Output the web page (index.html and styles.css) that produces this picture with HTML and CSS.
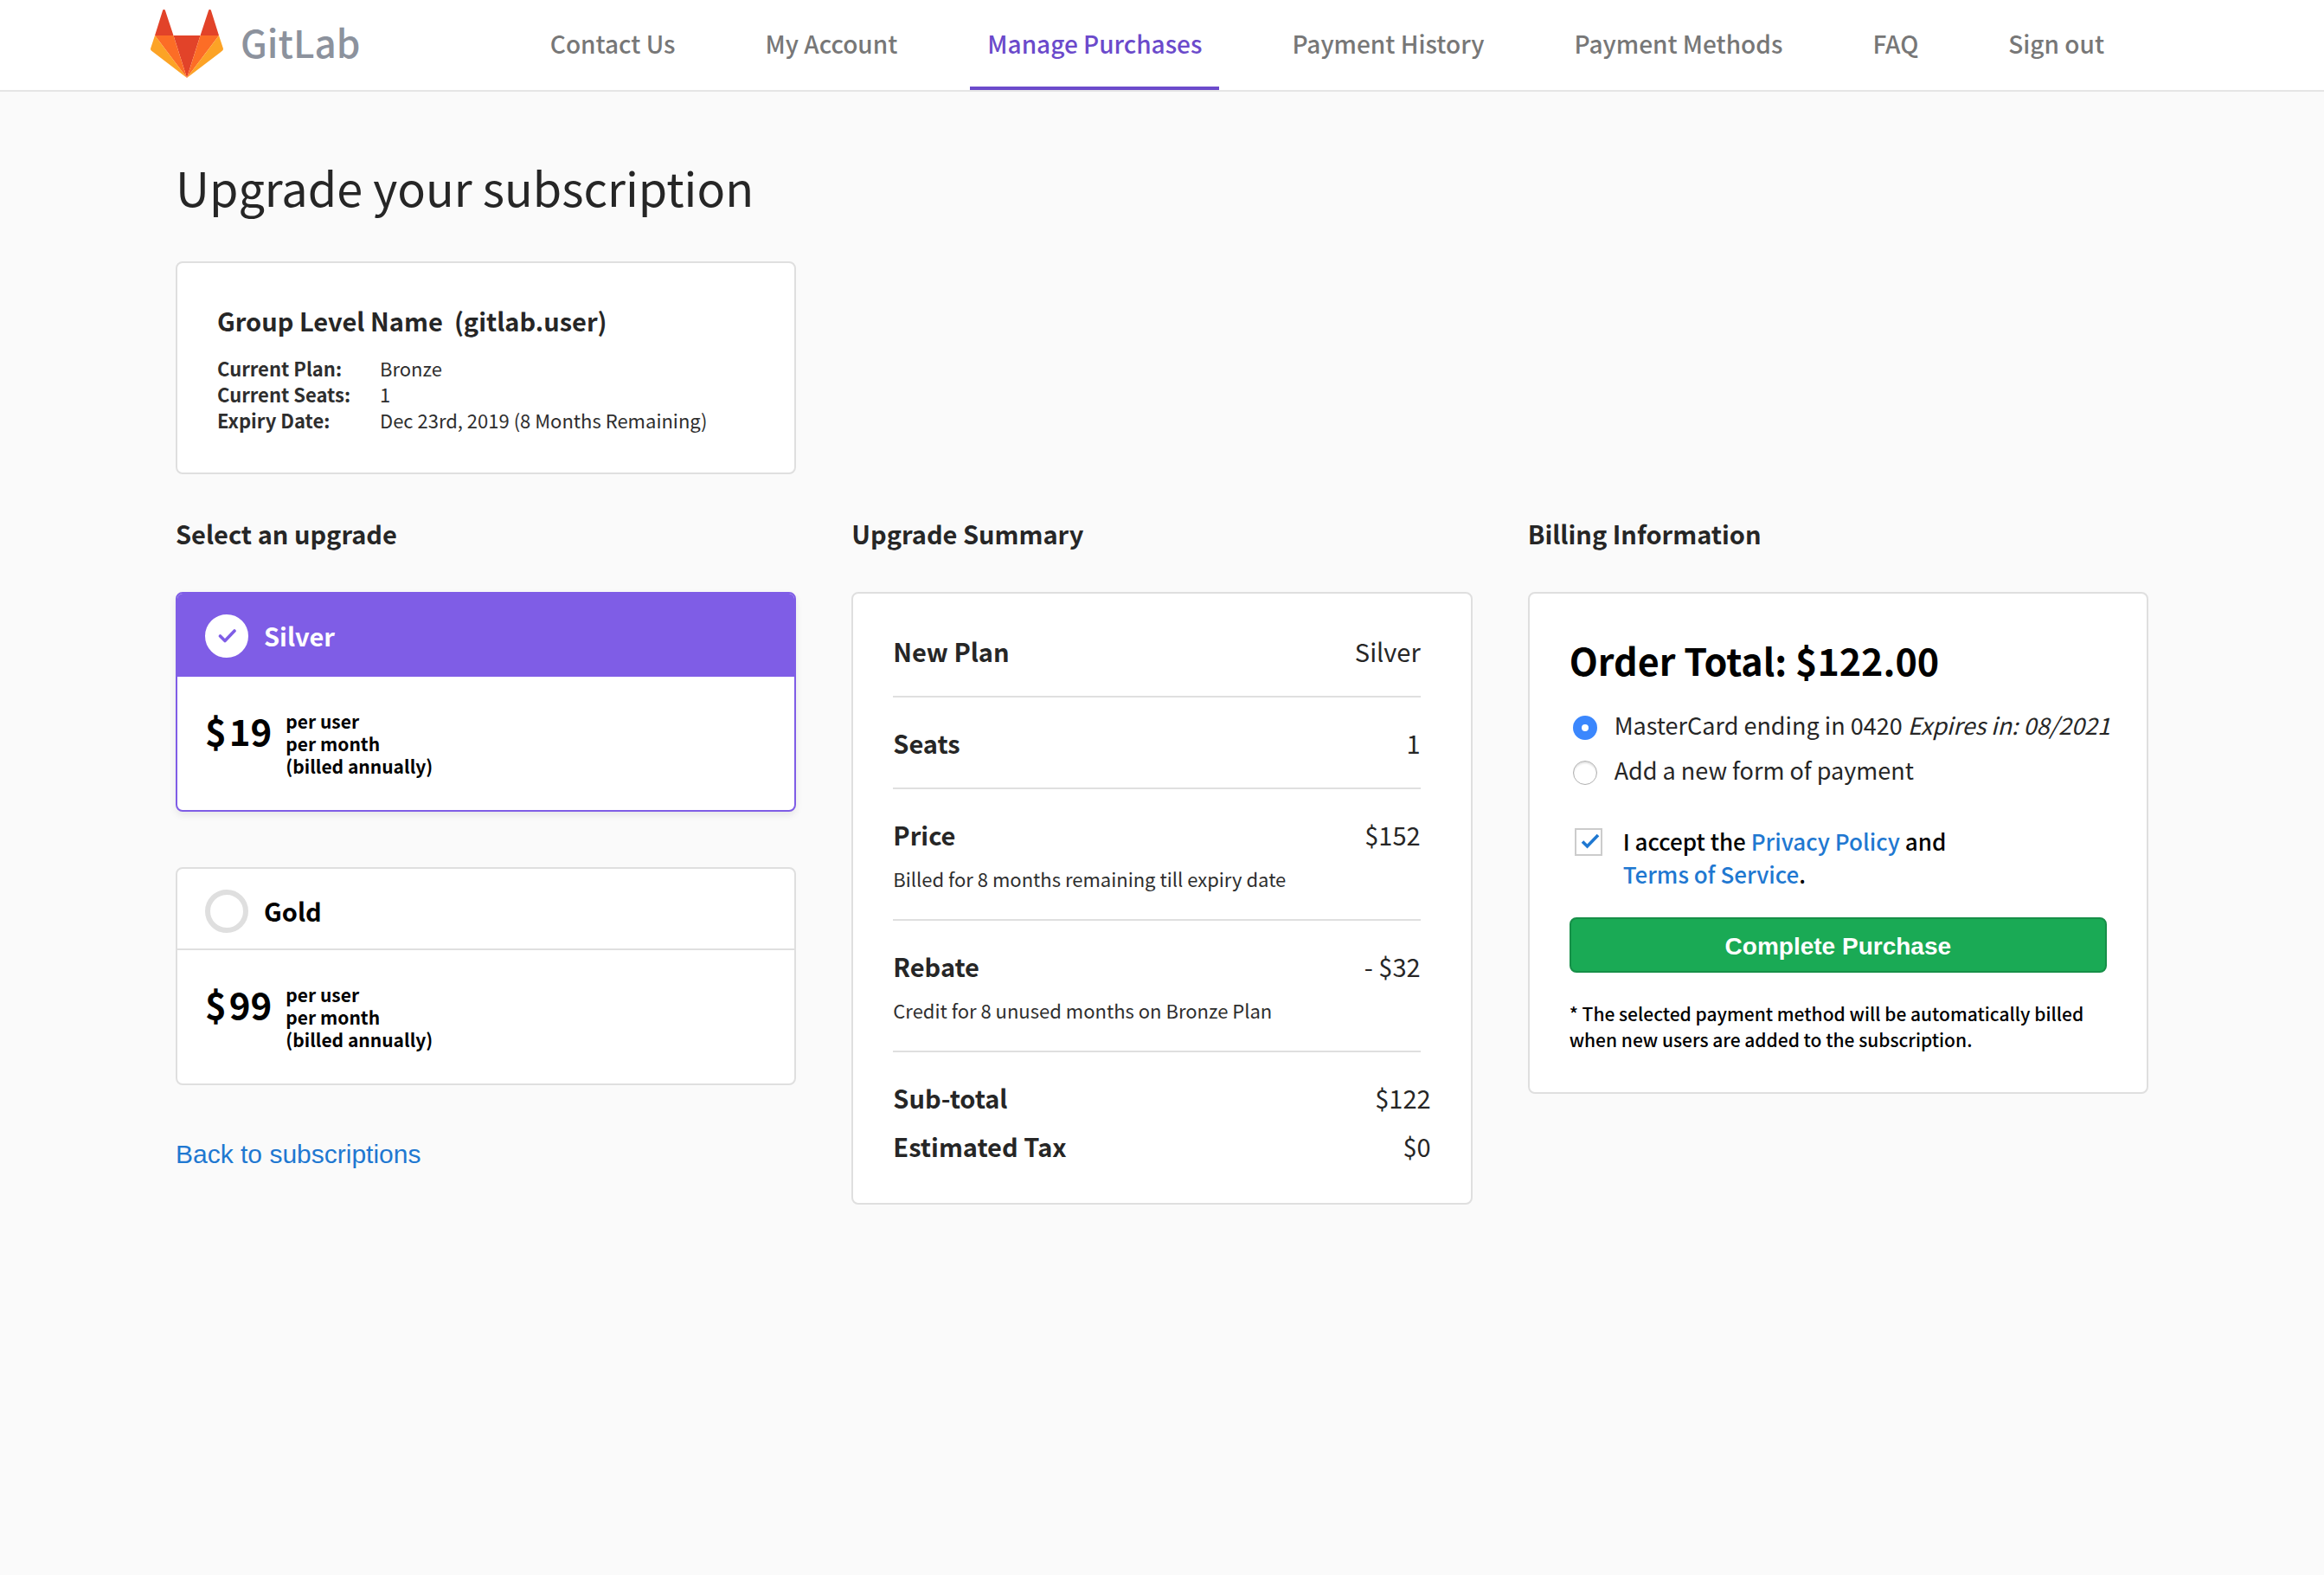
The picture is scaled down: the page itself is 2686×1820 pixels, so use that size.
FILE: index.html
```html
<!DOCTYPE html>
<html lang="en">
<head>
<meta charset="utf-8">
<meta name="viewport" content="width=device-width, initial-scale=1">
<title>Upgrade your subscription · GitLab</title>
<link rel="stylesheet" href="styles.css">
</head>
<body>
<header class="header">
  <a class="brand" href="#">
    <svg class="brand-mark" viewBox="0 0 84 79" aria-hidden="true">
      <path fill="#e24329" d="M42 79 57.5 30h-31z"/>
      <path fill="#fc6d26" d="M42 79 26.500 30H5z"/>
      <path fill="#fca326" d="M5 30 .300 44.300a3.200 3.200 0 0 0 1.200 3.800L42 79z"/>
      <path fill="#e24329" d="M5 30h21.500L17 1.200c-.5-1.600-2.500-1.600-3 0z"/>
      <path fill="#fc6d26" d="M42 79 57.500 30H79z"/>
      <path fill="#fca326" d="M79 30l4.700 14.300a3.200 3.200 0 0 1-1.200 3.800L42 79z"/>
      <path fill="#e24329" d="M79 30H57.500L67 1.200c.5-1.600 2.500-1.600 3 0z"/>
    </svg>
    <span class="brand-name">GitLab</span>
  </a>
  <nav class="nav" aria-label="Main">
    <a class="nav-link" href="#">Contact Us</a>
    <a class="nav-link" href="#">My Account</a>
    <a class="nav-link nav-link-active" href="#" aria-current="page">Manage Purchases</a>
    <a class="nav-link" href="#">Payment History</a>
    <a class="nav-link" href="#">Payment Methods</a>
    <a class="nav-link" href="#">FAQ</a>
    <a class="nav-link" href="#">Sign out</a>
  </nav>
</header>

<main class="page">
  <h1 class="title">Upgrade your subscription</h1>

  <div class="columns">
    <section class="card padded">
      <h2 class="heading">Group Level Name&nbsp; (gitlab.user)</h2>
      <dl class="facts">
        <dt>Current Plan:</dt><dd>Bronze</dd>
        <dt>Current Seats:</dt><dd>1</dd>
        <dt>Expiry Date:</dt><dd>Dec 23rd, 2019 (8 Months Remaining)</dd>
      </dl>
    </section>
  </div>

  <div class="columns">
    <section>
      <h2 class="heading section-heading">Select an upgrade</h2>
      <div class="plans">
        <label class="card plan plan-selected">
          <span class="plan-head">
            <span class="tick">
              <input class="plan-radio" type="radio" name="plan" checked>
              <svg class="tick-mark" width="50" height="50" viewBox="0 0 50 50" aria-hidden="true"><path d="M17.500 25l5.500 5.500L34 19" fill="none" stroke="#7f5de6" stroke-width="3.600" stroke-linecap="round" stroke-linejoin="round"/></svg>
            </span>
            <span>Silver</span>
          </span>
          <span class="plan-body">
            <span class="price"><span>$</span><span>19</span></span>
            <span class="terms">per user<br>per month<br>(billed annually)</span>
          </span>
        </label>
        <label class="card plan">
          <span class="plan-head">
            <span class="tick"><input class="plan-radio" type="radio" name="plan"></span>
            <span>Gold</span>
          </span>
          <span class="plan-body">
            <span class="price"><span>$</span><span>99</span></span>
            <span class="terms">per user<br>per month<br>(billed annually)</span>
          </span>
        </label>
      </div>
      <a class="link back" href="#">Back to subscriptions</a>
    </section>

    <section>
      <h2 class="heading section-heading">Upgrade Summary</h2>
      <div class="card padded">
        <dl class="summary">
          <div class="line"><dt>New Plan</dt><dd>Silver</dd></div>
          <div class="line"><dt>Seats</dt><dd>1</dd></div>
          <div class="line"><dt>Price</dt><dd>$152</dd><dd class="hint">Billed for 8 months remaining till expiry date</dd></div>
          <div class="line"><dt>Rebate</dt><dd>- $32</dd><dd class="hint">Credit for 8 unused months on Bronze Plan</dd></div>
        </dl>
        <dl class="totals">
          <div class="total"><dt>Sub-total</dt><dd>$122</dd></div>
          <div class="total"><dt>Estimated Tax</dt><dd>$0</dd></div>
        </dl>
      </div>
    </section>

    <section>
      <h2 class="heading section-heading">Billing Information</h2>
      <form class="card padded">
        <h3 class="order-total">Order Total: $122.00</h3>
        <div class="payments">
          <label class="payment"><input class="radio" type="radio" name="payment" checked><span>MasterCard ending in 0420 <em>Expires in: 08/2021</em></span></label>
          <label class="payment"><input class="radio" type="radio" name="payment"><span>Add a new form of payment</span></label>
        </div>
        <div class="consent">
          <span class="tick">
            <input class="checkbox" id="accept" type="checkbox" checked>
            <svg class="tick-mark" width="32" height="32" viewBox="0 0 32 32" aria-hidden="true"><path d="M9 15.500l5.500 5.500L27 8" fill="none" stroke="#1f78d1" stroke-width="3.600"/></svg>
          </span>
          <label for="accept">I accept the <a class="link" href="#">Privacy Policy</a> and<br><a class="link" href="#">Terms of Service</a>.</label>
        </div>
        <button class="button" type="submit">Complete Purchase</button>
        <p class="note">* The selected payment method will be automatically billed<br>when new users are added to the subscription.</p>
      </form>
    </section>
  </div>
</main>
</body>
</html>
```
FILE: styles.css
```css
* {
  box-sizing: border-box;
}

body {
  margin: 0;
  background: #fafafa;
  color: #262626;
  font-family: "Noto Sans CJK SC", "Noto Sans", sans-serif;
  font-size: 29px;
  line-height: 40px;
}

h1, h2, h3, p, dl, dd {
  margin: 0;
}

.header {
  display: flex;
  flex-wrap: wrap;
  justify-content: space-between;
  padding: 0 234px 0 174px;
  background: #fff;
  border-bottom: 2px solid #e5e5e5;
}

.brand {
  display: flex;
  align-items: center;
  gap: 20px;
  padding-bottom: 4px;
  color: #8c929d;
  text-decoration: none;
}

.brand-mark {
  width: 84px;
  height: 79px;
}

.brand-name {
  padding-bottom: 4px;
  font-size: 44px;
  font-weight: 500;
  line-height: 80px;
}

.nav {
  display: flex;
  flex-wrap: wrap;
  gap: 64px;
}

.nav-link {
  padding: 0 20px;
  border-bottom: 4px solid transparent;
  color: #777;
  font-size: 28px;
  font-weight: 500;
  line-height: 100px;
  text-decoration: none;
}

.nav-link-active {
  border-color: #6b4acb;
  color: #6b4acb;
}

.page {
  padding: 70px 203px;
}

.title {
  margin-bottom: 46px;
  font-size: 54px;
  font-weight: 400;
  line-height: 80px;
}

.columns {
  display: grid;
  grid-template-columns: repeat(3, minmax(0, 1fr));
  align-items: start;
  gap: 64px;
  margin-bottom: 48px;
}

.card {
  display: block;
  background: #fff;
  border: 2px solid #dfdfdf;
  border-radius: 8px;
}

.padded {
  padding: 46px;
}

.heading {
  font-size: 29px;
  font-weight: 700;
}

.section-heading {
  margin-bottom: 48px;
}

.facts {
  display: grid;
  grid-template-columns: 188px 1fr;
  margin-top: 20px;
  color: #2e2e2e;
  font-size: 22px;
  line-height: 30px;
}

.facts dt {
  font-weight: 700;
}

.plans {
  display: grid;
  gap: 64px;
}

.plan {
  overflow: hidden;
  color: #000;
}

.plan-head {
  display: flex;
  gap: 18px;
  padding: 24px 32px 18px;
  border-bottom: 2px solid #dfdfdf;
  font-weight: 700;
  line-height: 48px;
}

.plan-selected {
  border-color: #7f5de6;
  box-shadow: 0 4px 8px rgba(0, 0, 0, 0.08);
}

.plan-selected .plan-head {
  padding-bottom: 20px;
  border-color: #7f5de6;
  background: #7f5de6;
  color: #fff;
}

.tick {
  display: grid;
  flex: none;
  align-content: start;
}

.tick > * {
  grid-area: 1 / 1;
}

.tick-mark {
  pointer-events: none;
}

.plan-radio {
  width: 50px;
  height: 50px;
  margin: 0;
  appearance: none;
  background: #fff;
  border: 6px solid #dfdfdf;
  border-radius: 50%;
}

.plan-radio:checked {
  border-color: #fff;
}

.plan-body {
  display: flex;
  gap: 16px;
  padding: 38px 32px;
  font-weight: 700;
}

.price {
  display: flex;
  gap: 3px;
  font-size: 42px;
  line-height: 48px;
}

.terms {
  font-size: 21px;
  line-height: 26px;
}

.link {
  color: #1f78d1;
  text-decoration: none;
}

.back {
  display: inline-block;
  margin-top: 60px;
  font-family: "Liberation Sans", Arial, sans-serif;
  font-size: 30px;
}

.summary {
  display: grid;
  gap: 32px;
  margin-right: 12px;
}

.line {
  display: grid;
  grid-template-columns: 1fr auto;
  row-gap: 16px;
  padding-bottom: 32px;
  border-bottom: 2px solid #dfdfdf;
}

.line dt,
.total dt {
  font-weight: 700;
}

.hint {
  grid-column: 1 / -1;
  color: #2e2e2e;
  font-size: 22px;
  line-height: 30px;
}

.totals {
  display: grid;
  gap: 16px;
  margin-top: 32px;
}

.total {
  display: flex;
  justify-content: space-between;
}

.order-total {
  color: #000;
  font-size: 43px;
  font-weight: 700;
  line-height: 60px;
}

.payments {
  display: grid;
  margin: 20px 0 37px;
  font-size: 27px;
  line-height: 52px;
}

.payment {
  display: flex;
  align-items: center;
  gap: 20px;
  padding-left: 4px;
  white-space: nowrap;
}

.radio {
  flex: none;
  width: 28px;
  height: 28px;
  margin: 6px 0 0;
  appearance: none;
  background: #fff;
  border: 1px solid #b0b0b0;
  border-radius: 50%;
  box-shadow: inset 0 2px 2px rgba(0, 0, 0, 0.12);
}

.radio:checked {
  border: 10px solid #3b87fd;
  box-shadow: none;
}

.consent {
  display: flex;
  gap: 24px;
  padding-left: 6px;
  color: #000;
  font-size: 26px;
  font-weight: 500;
  line-height: 38px;
}

.checkbox {
  width: 32px;
  height: 32px;
  margin: 0;
  appearance: none;
  background: #fff;
  border: 2px solid #ccc;
}

.consent .tick {
  height: 32px;
  margin-top: 4px;
}

.button {
  display: block;
  width: 100%;
  height: 64px;
  margin: 31px 0 32px;
  padding: 4px 0 0;
  background: #1aaa55;
  border: 2px solid #168f48;
  border-radius: 8px;
  color: #fff;
  font-family: "Liberation Sans", Arial, sans-serif;
  font-size: 28px;
  font-weight: 700;
}

.note {
  color: #000;
  font-size: 21px;
  font-weight: 500;
  line-height: 30px;
}

@media (max-width: 2200px) {
  .header,
  .page {
    padding-left: 48px;
    padding-right: 48px;
  }

  .columns {
    grid-template-columns: repeat(auto-fit, minmax(min(100%, 700px), 1fr));
  }
}
```
